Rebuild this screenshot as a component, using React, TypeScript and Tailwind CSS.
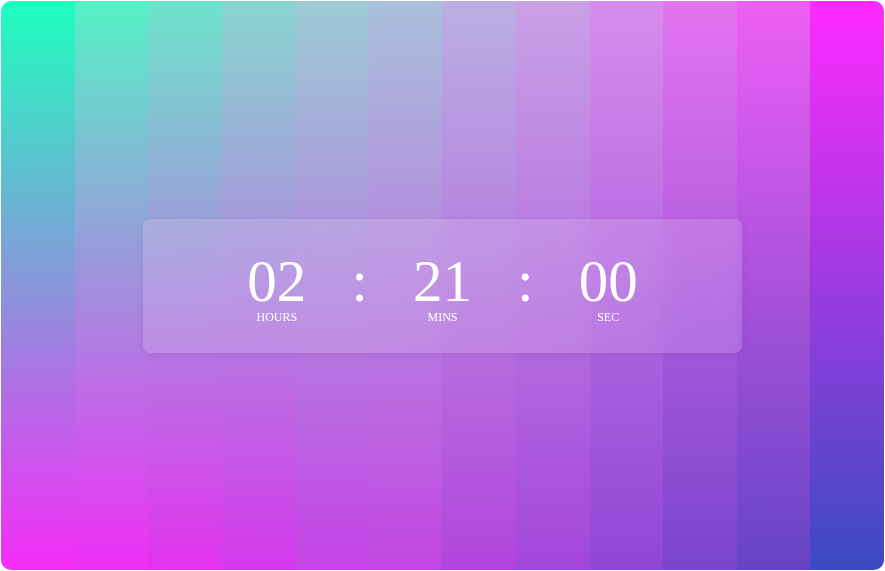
import React from "react";

const stripes = [
  "bg-[linear-gradient(to_bottom,#1dffbf,#f52cf7)]",
  "bg-[linear-gradient(to_bottom,#55f2c6,#ee2ef5)]",
  "bg-[linear-gradient(to_bottom,#6de4cc,#e232ee)]",
  "bg-[linear-gradient(to_bottom,#88d6d0,#d438ec)]",
  "bg-[linear-gradient(to_bottom,#9ccbd5,#c542e6)]",
  "bg-[linear-gradient(to_bottom,#a9bfdb,#c246e2)]",
  "bg-[linear-gradient(to_bottom,#baafe2,#b244dc)]",
  "bg-[linear-gradient(to_bottom,#c9a0e6,#a346da)]",
  "bg-[linear-gradient(to_bottom,#d88bed,#8f46d4)]",
  "bg-[linear-gradient(to_bottom,#e474ef,#7a44cc)]",
  "bg-[linear-gradient(to_bottom,#ee5ff4,#6544c4)]",
  "bg-[linear-gradient(to_bottom,#ff2aff,#3a4bc0)]",
];

function Unit({ value, label }: { value: string; label: string }) {
  return (
    <div className="flex flex-col items-center">
      <span className="text-[59px] leading-[50px] text-white">{value}</span>
      <span className="mt-[5px] text-[12px] leading-[12px] text-white">{label}</span>
    </div>
  );
}

function Colon() {
  return <span className="text-[60px] leading-[50px] text-white -mt-[18px]">:</span>;
}

export default function App() {
  return (
    <div className="w-[885px] h-[571px] bg-white p-px" style={{ fontFamily: '"Liberation Serif", "Times New Roman", serif' }}>
      <div className="grid h-full w-full overflow-hidden rounded-[10px]">
        <div className="[grid-area:1/1] flex h-full w-full">
          {stripes.map((c) => (
            <div key={c} className={"flex-1 " + c} />
          ))}
        </div>
        <div className="[grid-area:1/1] flex items-center justify-center">
          <div className="flex h-[134px] w-[599px] items-center justify-center gap-[45px] rounded-[7px] bg-white/15 pt-[8px] backdrop-blur-md shadow-[0_2px_10px_rgba(0,0,0,0.06)]">
            <Unit value="02" label="HOURS" />
            <Colon />
            <Unit value="21" label="MINS" />
            <Colon />
            <Unit value="00" label="SEC" />
          </div>
        </div>
      </div>
    </div>
  );
}
